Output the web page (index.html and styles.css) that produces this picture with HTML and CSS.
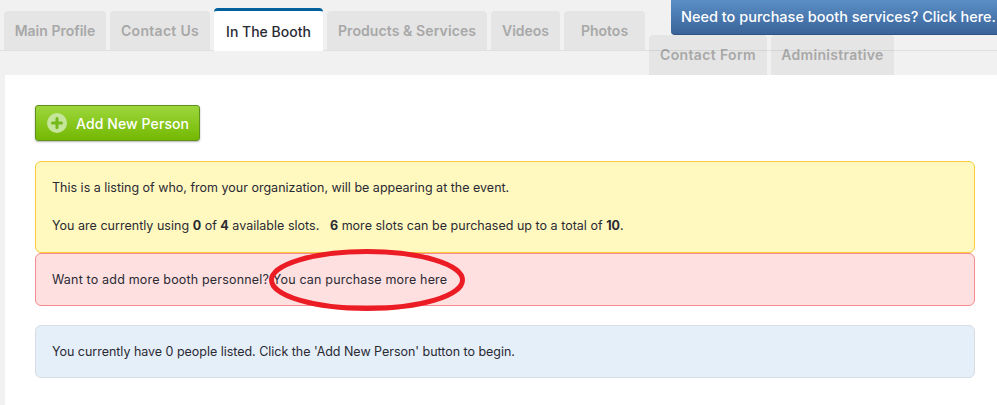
FILE: index.html
```html
<!DOCTYPE html>
<html lang="en">
<head>
<meta charset="utf-8">
<title>In The Booth</title>
<link rel="stylesheet" href="styles.css">
</head>
<body>
<nav class="tabs">
  <a class="tab tab-main">Main Profile</a>
  <a class="tab tab-contact">Contact Us</a>
  <a class="tab tab-booth active">In The Booth</a>
  <a class="tab tab-products">Products &amp; Services</a>
  <a class="tab tab-videos">Videos</a>
  <a class="tab tab-photos">Photos</a>
  <a class="tab low tab-form">Contact Form</a>
  <a class="tab low tab-admin">Administrative</a>
</nav>
<a class="services">Need to purchase booth services? Click here.</a>
<main class="panel">
  <a class="add">
    <svg class="add-icon" width="20" height="20" viewBox="0 0 20 20" aria-hidden="true">
      <circle cx="10" cy="10" r="10" fill="#c4e59a"/>
      <path d="M10 5.5v9M5.5 10h9" stroke="#74b81a" stroke-width="3" stroke-linecap="round"/>
    </svg>
    Add New Person
  </a>
  <div class="notice yellow">
    <p>This is a listing of who, from your organization, will be appearing at the event.</p>
    <p class="slots">You are currently using <b>0</b> of <b>4</b> available slots. &nbsp; <b>6</b> more slots can be purchased up to a total of <b>10</b>.</p>
  </div>
  <div class="notice red">
    <p>Want to add more booth personnel? You can purchase more here</p>
  </div>
  <div class="notice blue">
    <p>You currently have 0 people listed. Click the 'Add New Person' button to begin.</p>
  </div>
</main>
<svg class="oval" width="204" height="68" viewBox="0 0 204 68" aria-hidden="true">
  <ellipse cx="102" cy="34" rx="95.500" ry="28.500" fill="none" stroke="#ec1c24" stroke-width="5"/>
</svg>
</body>
</html>
```
FILE: styles.css
```css
* { box-sizing: border-box; }
html, body { margin: 0; padding: 0; }
body {
  width: 997px;
  height: 405px;
  overflow: hidden;
  position: relative;
  background: #f1f1f1;
  font-family: "Inter", "Liberation Sans", sans-serif;
  color: #2a2a33;
}
.tabs {
  display: flex;
  align-items: flex-start;
  gap: 4px;
  height: 75px;
  padding-left: 4px;
  position: relative;
}
.tabs::after {
  content: "";
  position: absolute;
  left: 0;
  right: 0;
  top: 50px;
  height: 1px;
  background: rgba(0, 0, 0, 0.07);
}
.tab {
  display: flex;
  align-items: center;
  justify-content: center;
  height: 39px;
  margin-top: 11px;
  padding-bottom: 1px;
  background: #e5e5e5;
  border-radius: 4px 4px 0 0;
  color: #a8a8a8;
  font-size: 14px;
  font-weight: 600;
  white-space: nowrap;
}
.tab-main { width: 102px; }
.tab-contact { width: 100px; letter-spacing: 0.3px; }
.tab-booth { width: 109px; }
.tab-products { width: 160px; letter-spacing: 0.1px; }
.tab-videos { width: 69px; }
.tab-photos { width: 81px; }
.tab-form { width: 118px; letter-spacing: 0.35px; }
.tab-admin { width: 123px; letter-spacing: 0.3px; }
.tab.low { height: 40px; margin-top: 35px; }
.tab.active {
  position: relative;
  z-index: 1;
  height: 43px;
  margin-top: 8px;
  padding-top: 2px;
  background: #fff;
  border-top: 3px solid #00609c;
  color: #2a2a33;
  font-weight: 500;
}
.services {
  position: absolute;
  top: 0;
  left: 671px;
  width: 326px;
  height: 35px;
  padding-left: 10px;
  line-height: 34px;
  color: #fff;
  font-size: 14.5px;
  font-weight: 500;
  white-space: nowrap;
  background: linear-gradient(#5a8fc6, #3a6399);
  border-bottom: 1px solid #2f5486;
  border-radius: 0 0 0 4px;
}
.panel {
  height: 330px;
  margin-left: 5px;
  padding: 30px 22px 0 30px;
  background: #fff;
}
.add {
  display: flex;
  align-items: center;
  gap: 9px;
  width: 165px;
  height: 36px;
  padding-left: 11px;
  margin-bottom: 20px;
  color: #fff;
  font-size: 14px;
  font-weight: 500;
  letter-spacing: 0.1px;
  background: linear-gradient(#9dd73c, #74b802);
  border: 1px solid #5f8f1c;
  border-radius: 3px;
  box-shadow: 0 1px 2px rgba(0, 0, 0, 0.3);
}
.add-icon { flex: none; }
.notice {
  padding: 0 16px;
  border: 1px solid;
  border-radius: 6px;
  font-size: 12.5px;
  display: flex;
  flex-direction: column;
  justify-content: center;
}
.notice p { margin: 0; }
.slots { letter-spacing: 0.02px; }
.yellow {
  height: 92px;
  gap: 23px;
  padding-bottom: 2px;
  background: #fff9c0;
  border-color: #fbcb3f;
}
.red {
  height: 53px;
  margin-bottom: 19px;
  letter-spacing: 0.18px;
  background: #fee0e1;
  border-color: #f48b8c;
}
.blue {
  height: 53px;
  letter-spacing: -0.025px;
  background: #e5eff9;
  border-color: #d8dde3;
}
.oval {
  position: absolute;
  left: 265px;
  top: 246px;
}
```
